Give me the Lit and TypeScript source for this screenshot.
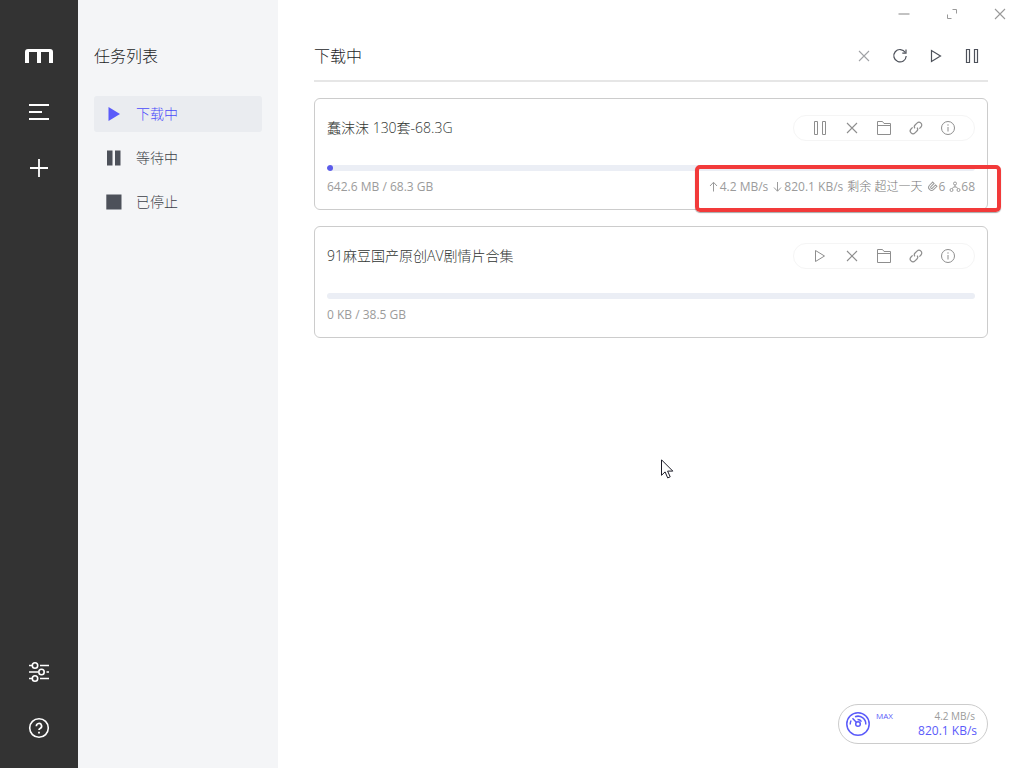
import { LitElement, html, css, svg, nothing } from "lit";
import { customElement, property } from "lit/decorators.js";
import { classMap } from "lit/directives/class-map.js";
import { styleMap } from "lit/directives/style-map.js";

const glyphs: Record<string, unknown> = {
  menu: svg`<path d="M2 5h20M2 12h13M2 19h20" stroke-width="1.800"/>`,
  plus: svg`<path d="M3 12h18M12 3v18" stroke-width="1.800"/>`,
  preferences: svg`<g stroke-width="1.600">
    <path d="M2 5.500h3M13 5.500h9M2 12h9M19.500 12h2.500M2 18.500h3M13 18.500h9"/>
    <circle cx="8" cy="5.500" r="2.700"/><circle cx="14.500" cy="12" r="2.700"/><circle cx="8" cy="18.500" r="2.700"/></g>`,
  help: svg`<circle cx="12" cy="12" r="9.3" stroke-width="1.6"/>
    <path d="M9.400 10.200a2.600 2.600 0 1 1 3.700 2.200c-.8.400-1.100.8-1.100 1.700" stroke-width="1.700"/>
    <path d="M12 15.800v1.700" stroke-width="1.800"/>`,
  playSolid: svg`<path d="M6.500 5v14l11.500-7z" fill="currentColor" stroke="none"/>`,
  pauseSolid: svg`<path d="M5 4.500h5.500v15H5zM13 4.500h5.500v15H13z" fill="currentColor" stroke="none"/>`,
  stopSolid: svg`<path d="M4.300 4.500h15.200v15H4.300z" fill="currentColor" stroke="none"/>`,
  play: svg`<path d="M7.500 6.500v11l9-5.500z"/>`,
  pause: svg`<path d="M6.500 5.500h3v13h-3zM14.500 5.500h3v13h-3z"/>`,
  close: svg`<path d="M7 7l10 10M17 7L7 17" stroke-width="1.100"/>`,
  refresh: svg`<path d="M17.300 8.500A6.200 6.200 0 1 0 18.200 12"/><path d="M18 5.500v3.700h-3.700"/>`,
  folder: svg`<path d="M5.500 18.500v-13h5l1.500 2h6.500v11zM5.500 9.500h13"/>`,
  link: svg`<g transform="rotate(-45 12 12)" stroke-width="1.200"><path d="M10 9.200H7.800a2.800 2.800 0 0 0 0 5.600h2.700a2.500 2.500 0 0 0 2.500-2.300M14 14.800h2.200a2.800 2.800 0 0 0 0-5.600h-2.700a2.500 2.500 0 0 0-2.500 2.300"/></g>`,
  info: svg`<circle cx="12" cy="12" r="6.500"/><path d="M12 11v4.500M12 8.300v1.400"/>`,
  minimize: svg`<path d="M6.500 12h11" stroke-width="1.200"/>`,
  maximize: svg`<path d="M12.500 7.500h4v4M7.500 12.500v4h4"/>`,
  up: svg`<path d="M11 21V3M4 10l7-7.500 7 7.500"/>`,
  down: svg`<path d="M11 2v18M4 13l7 7.500 7-7.500"/>`,
  magnet: svg`<g transform="rotate(45 12 12)"><path d="M6 4h4v9a2 2 0 0 0 4 0V4h4v9a6 6 0 0 1-12 0z"/></g>`,
  node: svg`<circle cx="12" cy="5" r="3"/><circle cx="5" cy="18" r="3"/><circle cx="19" cy="18" r="3"/><path d="M12 8v4M7 15l2-3h6l2 3"/>`,
  gauge: svg`<g stroke-width="1.500"><circle cx="12" cy="12" r="11.200"/><circle cx="12" cy="12" r="2.300"/>
    <path d="M10.300 10.300L6.500 6.300M4.200 12.500a7.800 7.800 0 0 1 .9-4M9 4.800a7.800 7.800 0 0 1 10.800 7.700M11.500 7.600a4.600 4.600 0 0 1 4 2"/></g>`,
};

const icon = (name: string) => html`<svg class="icon" viewBox="0 0 24 24" aria-hidden="true">${glyphs[name]}</svg>`;

const base = css`
  * { box-sizing: border-box; }
  button {
    display: flex; align-items: center; justify-content: center;
    padding: 0; border: 0; background: none; color: inherit; font: inherit; cursor: pointer;
  }
  .icon {
    display: block; flex: none; width: 24px; height: 24px;
    fill: none; stroke: currentColor; stroke-width: 1;
  }
`;

interface Task {
  name: string;
  done: string;
  total: string;
  percent: number;
  running: boolean;
  marked?: boolean;
  upload?: string;
  download?: string;
  remaining?: string;
  seeders?: number;
  peers?: number;
}

const tasks: Task[] = [
  {
    name: "蠢沫沫 130套-68.3G", done: "642.6 MB", total: "68.3 GB", percent: 0.9, running: true, marked: true,
    upload: "4.2 MB/s", download: "820.1 KB/s", remaining: "剩余 超过一天", seeders: 6, peers: 68,
  },
  { name: "91麻豆国产原创AV剧情片合集", done: "0 KB", total: "38.5 GB", percent: 0, running: false },
];

@customElement("app-aside")
class AppAside extends LitElement {
  static styles = [base, css`
    :host {
      display: flex; flex-direction: column; justify-content: space-between;
      flex: none; width: 78px; padding: 40px 0 24px; background: #333; color: #fff;
    }
    .group { display: flex; flex-direction: column; align-items: center; gap: 24px; }
    .item { width: 32px; height: 32px; }
    .logo { display: flex; align-items: center; height: 32px; }
    .mark { width: 28px; height: 14px; fill: #fff; }
  `];
  render() {
    return html`
      <div class="group">
        <a class="logo" href="#" aria-label="Motrix">
          <svg class="mark" viewBox="0 0 28 14"><path d="M0 14V3a3 3 0 0 1 3-3h22a3 3 0 0 1 3 3v11h-4V3H16v11h-4V3H4v11z"/></svg>
        </a>
        <button class="item" aria-label="任务列表">${icon("menu")}</button>
        <button class="item" aria-label="新建任务">${icon("plus")}</button>
      </div>
      <div class="group">
        <button class="item" aria-label="偏好设置">${icon("preferences")}</button>
        <button class="item" aria-label="帮助">${icon("help")}</button>
      </div>`;
  }
}

@customElement("task-nav")
class TaskNav extends LitElement {
  static styles = [base, css`
    :host { display: block; flex: none; width: 200px; padding: 44px 16px 0; background: #f4f5f7; }
    .title { margin: 0 0 28px; font-size: 16px; line-height: 24px; font-weight: 300; color: #1c1d1f; }
    .list { display: flex; flex-direction: column; gap: 8px; margin: 0; padding: 0; list-style: none; }
    .entry {
      display: flex; align-items: center; gap: 10px; height: 36px; padding: 0 8px; border-radius: 3px;
      font-size: 14px; line-height: 20px; font-weight: 300; color: #3c4048; text-decoration: none;
    }
    .entry .icon { color: #4d515a; }
    .active { background: #eaecf0; color: #4b4bfa; }
    .active .icon { color: #5b5bfa; }
  `];
  render() {
    const entries = [["下载中", "playSolid"], ["等待中", "pauseSolid"], ["已停止", "stopSolid"]];
    return html`<h2 class="title">任务列表</h2>
      <ul class="list">${entries.map(([label, name], i) => html`
        <li><a href="#" class=${classMap({ entry: true, active: i === 0 })}>${icon(name)}<span>${label}</span></a></li>`)}
      </ul>`;
  }
}

@customElement("task-card")
class TaskCard extends LitElement {
  @property({ attribute: false }) task!: Task;
  static styles = [base, css`
    :host { display: block; }
    .card { position: relative; padding: 16px 12px 14px; border: 1px solid #ccc; border-radius: 6px; }
    .head { display: flex; align-items: center; justify-content: space-between; margin-bottom: 24px; }
    .name { margin: 0; font-size: 14px; line-height: 20px; font-weight: 300; color: #303532; }
    .actions {
      display: flex; align-items: center; height: 26px; padding: 0 10px;
      border: 1px solid #f5f5f5; border-radius: 13px; color: #8e8e8e;
    }
    .actions button { width: 32px; height: 24px; }
    .bar { height: 6px; border-radius: 3px; background: #ebeef5; overflow: hidden; }
    .fill { height: 6px; border-radius: 3px; background: #5b5bea; }
    .meta {
      display: flex; justify-content: space-between; margin-top: 8px; min-height: 16px;
      font-size: 12px; line-height: 16px; color: #9b9b9b;
    }
    .stats { display: flex; gap: 4px; }
    .stat { display: flex; align-items: center; }
    .stat .icon { width: 12px; height: 12px; stroke-width: 2; }
    .left { font-weight: 300; color: #777; }
    .spot {
      position: absolute; right: -14px; bottom: -3px; width: 306px; height: 47px;
      border: 4px solid #f23a3a; border-radius: 5px; pointer-events: none;
      box-shadow: 0 1px 1px rgba(0, 0, 0, 0.35);
    }
  `];
  render() {
    const t = this.task;
    return html`<article class="card">
      <div class="head">
        <h3 class="name">${t.name}</h3>
        <div class="actions">
          <button aria-label=${t.running ? "暂停" : "开始"}>${icon(t.running ? "pause" : "play")}</button>
          <button aria-label="删除">${icon("close")}</button>
          <button aria-label="文件夹">${icon("folder")}</button>
          <button aria-label="链接">${icon("link")}</button>
          <button aria-label="详情">${icon("info")}</button>
        </div>
      </div>
      <div class="bar" role="progressbar" aria-valuenow=${t.percent} aria-label=${t.name}>
        <div class="fill" style=${styleMap({ width: `${t.percent}%` })}></div>
      </div>
      <div class="meta">
        <span>${t.done} / ${t.total}</span>
        ${t.upload ? html`<div class="stats">
          <span class="stat">${icon("up")}${t.upload}</span>
          <span class="stat">${icon("down")}${t.download}</span>
          <span class="stat left">${t.remaining}</span>
          <span class="stat">${icon("magnet")}${t.seeders}</span>
          <span class="stat">${icon("node")}${t.peers}</span>
        </div>` : nothing}
      </div>
      ${t.marked ? html`<div class="spot"></div>` : nothing}
    </article>`;
  }
}

@customElement("speed-meter")
class SpeedMeter extends LitElement {
  static styles = [base, css`
    :host {
      position: absolute; right: 36px; bottom: 24px; display: flex; align-items: flex-start;
      width: 150px; height: 40px; padding: 0 10px 0 7px;
      border: 1px solid #ccc; border-radius: 20px; background: #fff; color: #5b5bfa;
    }
    .icon { margin-top: 7px; }
    .mode { margin-left: 6px; padding-top: 5px; font-size: 8px; line-height: 12px; }
    .rates { margin-left: auto; text-align: right; padding-top: 4px; }
    .up { padding-right: 2px; font-size: 10px; line-height: 14px; color: #9b9b9b; }
    .down { font-size: 12px; line-height: 16px; }
  `];
  render() {
    return html`${icon("gauge")}<span class="mode">MAX</span>
      <div class="rates"><div class="up">4.2 MB/s</div><div class="down">820.1 KB/s</div></div>`;
  }
}

@customElement("mouse-pointer")
class MousePointer extends LitElement {
  static styles = css`
    :host { position: absolute; left: 383px; top: 459px; pointer-events: none; }
    .arrow { display: block; width: 13px; height: 20px; fill: #fff; stroke: #1c1c28; }
  `;
  render() {
    return html`<svg class="arrow" viewBox="0 0 13 20"><path d="M.5.8v15.500l3.600-3.400 2.600 6 2.500-1.100-2.600-5.700h5.200z"/></svg>`;
  }
}

@customElement("app-root")
class AppRoot extends LitElement {
  static styles = [base, css`
    :host {
      display: flex; min-height: 100vh; background: #fff;
      font-family: "Open Sans", "Noto Sans CJK SC", sans-serif;
    }
    .main { position: relative; flex: 1; min-width: 0; }
    .window { display: flex; justify-content: flex-end; height: 28px; color: #999; }
    .window button { width: 48px; height: 28px; }
    .content { padding: 16px 36px 0; }
    .bar {
      display: flex; align-items: center; justify-content: space-between;
      height: 38px; padding-bottom: 12px; border-bottom: 2px solid #e6e6e6;
    }
    .title { margin: 0; font-size: 16px; line-height: 24px; font-weight: 300; color: #1c1d1f; }
    .tools { display: flex; gap: 12px; padding-right: 4px; color: #4d515a; }
    .tools .dim { color: #a0a2a6; }
    .tools .icon { stroke-width: 1.2; }
    .tasks { display: flex; flex-direction: column; gap: 16px; padding-top: 16px; }
  `];
  render() {
    return html`
      <app-aside></app-aside>
      <task-nav></task-nav>
      <main class="main">
        <div class="window">
          <button aria-label="最小化">${icon("minimize")}</button>
          <button aria-label="最大化">${icon("maximize")}</button>
          <button aria-label="关闭">${icon("close")}</button>
        </div>
        <div class="content">
          <header class="bar">
            <h1 class="title">下载中</h1>
            <div class="tools">
              <button class="dim" aria-label="删除">${icon("close")}</button>
              <button aria-label="刷新">${icon("refresh")}</button>
              <button aria-label="全部开始">${icon("play")}</button>
              <button aria-label="全部暂停">${icon("pause")}</button>
            </div>
          </header>
          <div class="tasks">${tasks.map((t) => html`<task-card .task=${t}></task-card>`)}</div>
        </div>
        <speed-meter></speed-meter>
        <mouse-pointer></mouse-pointer>
      </main>`;
  }
}
